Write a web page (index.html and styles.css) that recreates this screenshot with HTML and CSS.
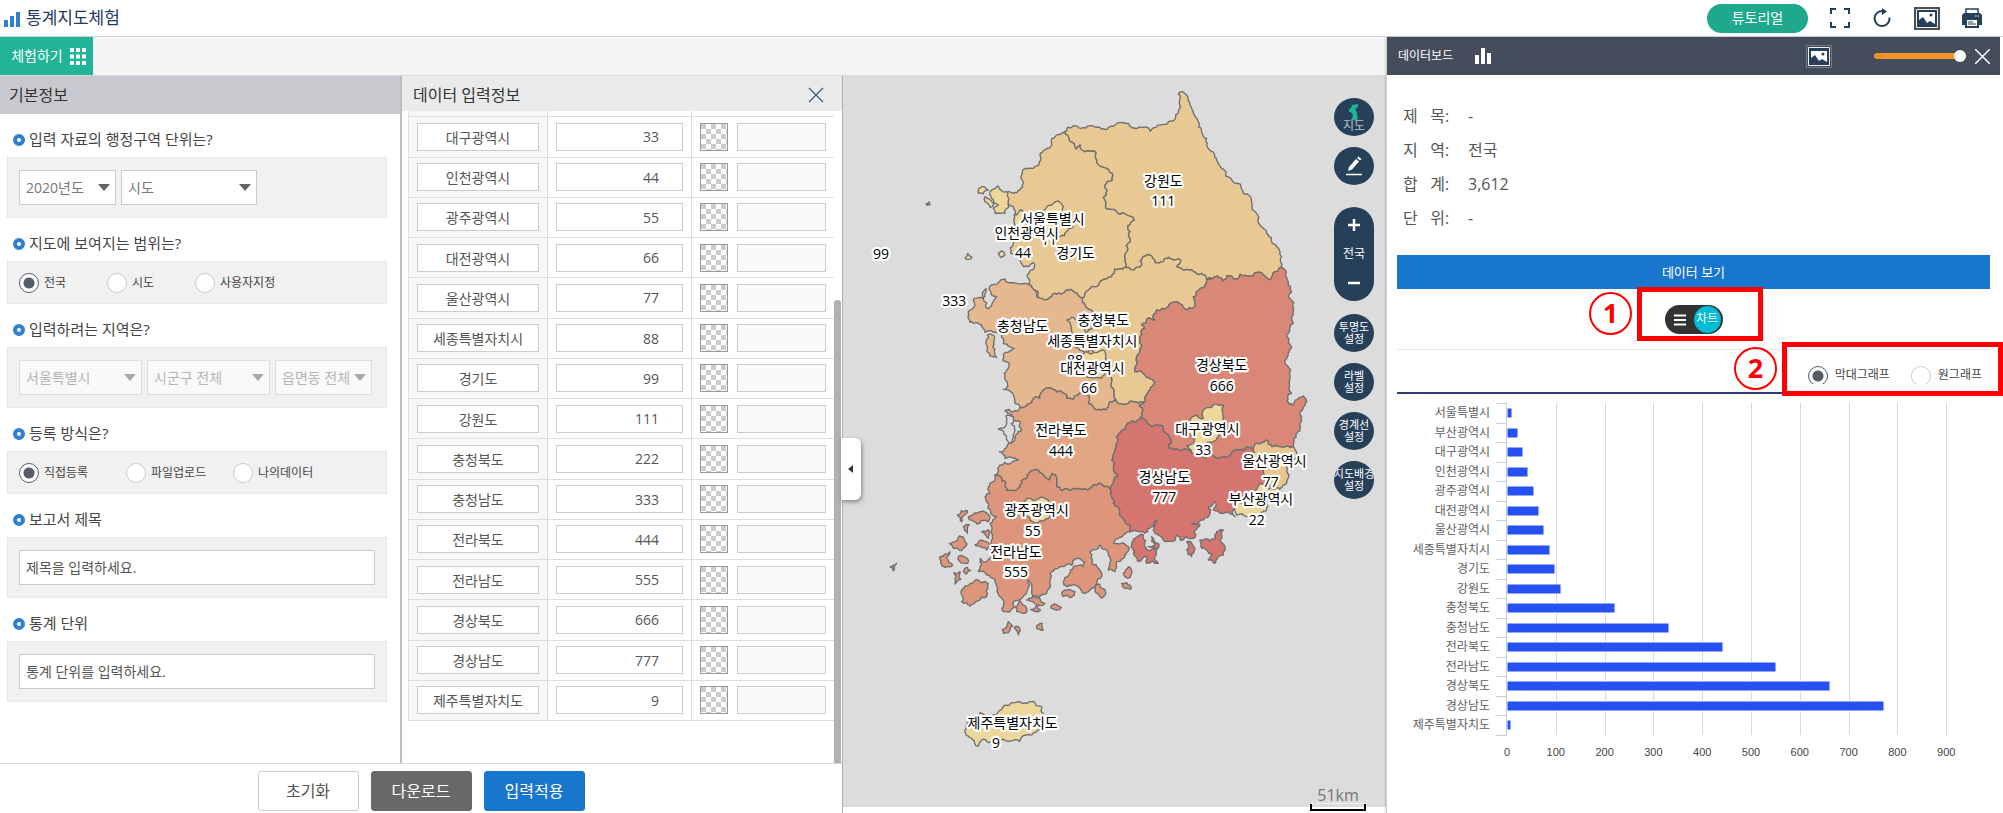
FILE: index.html
```html
<!DOCTYPE html>
<html lang="ko">
<head>
<meta charset="utf-8">
<title>통계지도체험</title>
<link rel="stylesheet" href="styles.css">
</head>
<body>
<header class="topbar">
  <svg class="logo" width="17" height="15" viewBox="0 0 17 15"><path d="M0 8h4v7H0zM6 4h4v11H6zM12 0h4v15h-4z" fill="#2f80d0"/></svg>
  <h1 class="title">통계지도체험</h1>
  <nav class="top-tools">
    <button class="tutorial" type="button">튜토리얼</button>
    <button class="tool" type="button" aria-label="전체화면"><svg width="20" height="20" viewBox="0 0 20 20"><path d="M1 6V1h5M14 1h5v5M19 14v5h-5M6 19H1v-5" fill="none" stroke="#27405a" stroke-width="2"/></svg></button>
    <button class="tool" type="button" aria-label="새로고침"><svg width="20" height="20" viewBox="0 0 20 20"><path d="M17.500 9.500a7.500 7.500 0 1 1-7.500-6.500h2" fill="none" stroke="#27405a" stroke-width="2"/><path d="M10 0l5 3.500-5 3.500z" fill="#27405a"/></svg></button>
    <button class="tool" type="button" aria-label="이미지 저장"><svg width="26" height="23" viewBox="0 0 26 23"><path d="M0 0h26v23H0z" fill="#4a4f58"/><path d="M2.500 2.500h21v18h-21z" fill="#27405a" stroke="#f2efe4"/><path d="M5 5h16v12l-5-3-3 2-4-6-4 3z" fill="#fff"/><circle cx="17" cy="8" r="1.500" fill="#27405a"/></svg></button>
    <button class="tool" type="button" aria-label="인쇄"><svg width="20" height="20" viewBox="0 0 20 20"><path d="M4 5V1h12v4" fill="none" stroke="#27405a" stroke-width="1.500"/><path d="M2 5h16l2 2v10h-3v3H3v-3H0V7z" fill="#27405a"/><path d="M5 12h10v6H5z" fill="#fff"/><path d="M6 14h5M6 16h8" stroke="#27405a"/><path d="M13 8h4" stroke="#fff" stroke-dasharray="1.500 1"/></svg></button>
  </nav>
</header>
<div class="layout">
  <main class="workspace">
    <div class="toolbar">
      <button class="try" type="button">체험하기 <svg width="16" height="17" viewBox="0 0 16 17"><path d="M0 0h4v4H0zM6 0h4v4H6zM12 0h4v4h-4zM0 6.500h4v4H0zM6 6.500h4v4H6zM12 6.500h4v4h-4zM0 13h4v4H0zM6 13h4v4H6zM12 13h4v4h-4z" fill="#fff"/></svg></button>
    </div>
    <div class="stage">
      <div class="forms">
        <div class="panels">
          <section class="panel basic">
            <h2 class="panel-title">기본정보</h2>
            <h3 class="question">입력 자료의 행정구역 단위는?</h3>
            <div class="box">
              <select class="select w-s" aria-label="연도"><option>2020년도</option></select>
              <select class="select w-l" aria-label="행정구역 단위"><option>시도</option></select>
            </div>
            <h3 class="question">지도에 보여지는 범위는?</h3>
            <div class="box radios r88">
              <label class="radio"><input type="radio" name="range" checked>전국</label>
              <label class="radio"><input type="radio" name="range">시도</label>
              <label class="radio"><input type="radio" name="range">사용자지정</label>
            </div>
            <h3 class="question">입력하려는 지역은?</h3>
            <div class="box">
              <select class="select w-m" aria-label="시도" disabled><option>서울특별시</option></select>
              <select class="select w-m" aria-label="시군구" disabled><option>시군구 전체</option></select>
              <select class="select w-s" aria-label="읍면동" disabled><option>읍면동 전체</option></select>
            </div>
            <h3 class="question">등록 방식은?</h3>
            <div class="box radios r107">
              <label class="radio"><input type="radio" name="method" checked>직접등록</label>
              <label class="radio"><input type="radio" name="method">파일업로드</label>
              <label class="radio"><input type="radio" name="method">나의데이터</label>
            </div>
            <h3 class="question"><label for="report">보고서 제목</label></h3>
            <div class="box"><input class="text" id="report" type="text" placeholder="제목을 입력하세요."></div>
            <h3 class="question"><label for="unit">통계 단위</label></h3>
            <div class="box"><input class="text" id="unit" type="text" placeholder="통계 단위를 입력하세요."></div>
          </section>
          <section class="panel data">
            <div class="panel-title light">
              <h2 class="panel-name">데이터 입력정보</h2>
              <button class="close" type="button" aria-label="닫기"><svg width="16" height="16" viewBox="0 0 16 16"><path d="M1 1l14 14M15 1L1 15" stroke="#3d5a78" stroke-width="1.300"/></svg></button>
            </div>
            <div class="scroller">
              <div class="scroll-view"><table class="grid"><tbody id="rows"></tbody></table></div>
              <div class="track"><div class="thumb"></div></div>
            </div>
          </section>
        </div>
        <div class="actions">
          <button class="btn" type="button">초기화</button>
          <button class="btn dark" type="button">다운로드</button>
          <button class="btn blue" type="button">입력적용</button>
        </div>
        <button class="fold" type="button" aria-label="접기"><svg width="5" height="8" viewBox="0 0 5 8"><path d="M5 0v8L0 4z" fill="#333"/></svg></button>
      </div>
      <section class="map" aria-label="지도">
        <svg class="map-svg" id="map" viewBox="9 -12 1629 2193" preserveAspectRatio="xMidYMin slice"></svg>
        <div class="map-tools">
          <button class="round first" type="button"><svg width="12" height="17" viewBox="0 0 12 17"><path d="M4 1l6-1v3L7 5l2 3v3l1 4-3 2-3-2 1-4-2-3H1V5l2-1z" fill="#1fb495"/></svg><span>지도</span></button>
          <button class="round edit" type="button" aria-label="그리기"><svg width="18" height="20" viewBox="0 0 18 20"><path d="M3 15l1-4 7-8 3 2.500-7 8zM12 2l1.500-1.500 3 2.500L15 4.500z" fill="#fff"/><path d="M1 18.500h16" stroke="#fff" stroke-width="1.500"/></svg></button>
          <div class="pill">
            <button type="button" aria-label="확대"><svg width="12" height="12" viewBox="0 0 12 12"><path d="M0 6h12M6 0v12" stroke="#fff" stroke-width="2.500"/></svg></button>
            <span>전국</span>
            <button type="button" aria-label="축소"><svg width="12" height="12" viewBox="0 0 12 12"><path d="M0 6h12" stroke="#fff" stroke-width="2.500"/></svg></button>
          </div>
          <button class="round" type="button"><span>투명도</span><span>설정</span></button>
          <button class="round" type="button"><span>라벨</span><span>설정</span></button>
          <button class="round" type="button"><span>경계선</span><span>설정</span></button>
          <button class="round" type="button"><span>지도배경</span><span>설정</span></button>
        </div>
        <div class="scale"><span>51km</span><i class="ruler"></i></div>
      </section>
    </div>
  </main>
  <aside class="board">
    <div class="board-head">
      <h2 class="board-title">데이터보드</h2>
      <svg width="16" height="16" viewBox="0 0 16 16"><path d="M0 7h4v9H0zM6 0h4v16H6zM12 5h4v11h-4z" fill="#fff"/></svg>
      <svg class="push" width="26" height="23" viewBox="0 0 26 23"><path d="M.500.500h25v22H.500z" fill="#454c5c" stroke="#737985"/><path d="M2.500 2.500h21v18h-21z" fill="#27405a" stroke="#f2efe4"/><path d="M5 6h16v11l-5-3-3 2-4-6-4 3z" fill="#fff"/><circle cx="17" cy="9" r="1.500" fill="#27405a"/></svg>
      <input class="slider" type="range" value="100" aria-label="투명도">
      <button class="close" type="button" aria-label="닫기"><svg width="15" height="15" viewBox="0 0 15 15"><path d="M0 0l15 15M15 0L0 15" stroke="#fff" stroke-width="1.500"/></svg></button>
    </div>
    <div class="board-body">
      <dl class="info">
        <dt>제&nbsp;&nbsp; 목:</dt><dd>-</dd>
        <dt>지&nbsp;&nbsp; 역:</dt><dd>전국</dd>
        <dt>합&nbsp;&nbsp; 계:</dt><dd>3,612</dd>
        <dt>단&nbsp;&nbsp; 위:</dt><dd>-</dd>
      </dl>
      <button class="view" type="button">데이터 보기</button>
      <div class="switch-row">
        <button class="switch" type="button"><svg width="12" height="12" viewBox="0 0 12 12"><path d="M0 1.500h12M0 6h12M0 10.500h12" stroke="#fff" stroke-width="2"/></svg><span class="knob">차트</span></button>
      </div>
      <div class="kind">
        <label class="radio"><input type="radio" name="kind" checked>막대그래프</label>
        <label class="radio"><input type="radio" name="kind">원그래프</label>
      </div>
      <svg class="chart" id="chart" viewBox="0 0 593 375"></svg>
    </div>
    <div class="mark box-1"></div><div class="num num-1">1</div>
    <div class="mark box-2"></div><div class="num num-2">2</div>
  </aside>
</div>
<script src="script.js"></script>
</body>
</html>
```
FILE: styles.css
```css
*, *::before { box-sizing: border-box; }
body {
  margin: 0;
  height: 100vh;
  display: flex;
  flex-direction: column;
  overflow: hidden;
  background: #fff;
  color: #555;
  font: 14px/20px "Open Sans", "Noto Sans CJK KR", sans-serif;
}
h1, h2, h3, dl, dd { margin: 0; font-weight: 400; }
button, input, select { font: inherit; color: inherit; margin: 0; padding: 0; }
button { border: 0; background: none; }
svg { display: block; flex: none; }

.topbar { flex: 0 0 37px; display: flex; align-items: center; padding: 0 21px 0 4px; border-bottom: 1px solid #d3d4da; }
.title { margin-left: 5px; font-size: 17px; line-height: 24px; color: #1f3864; }
.logo { margin-top: 2px; }
.top-tools { margin-left: auto; display: flex; align-items: center; gap: 22px; }
.tutorial { width: 101px; height: 29px; border-radius: 15px; background: #1ea98c; color: #fff; }

.layout { flex: 1; min-height: 0; display: flex; }
.workspace { flex: 1; min-width: 0; display: flex; flex-direction: column; }
.toolbar { flex: 0 0 39px; background: #f5f5f5; border-bottom: 1px solid #d8d8d8; }
.try { display: flex; align-items: center; justify-content: center; gap: 7px; width: 93px; height: 38px; padding-left: 4px; background: #22b496; color: #fff; }
.stage { flex: 1; min-height: 0; display: flex; }
.forms { flex: 0 0 843px; position: relative; display: flex; flex-direction: column; border-right: 1px solid #aeb0b3; }
.panels { flex: 1; min-height: 0; display: flex; }
.basic { flex: 0 0 402px; border-right: 2px solid #bcbcbc; }
.data { flex: 1; display: flex; flex-direction: column; }
.panel-title { height: 38px; padding: 0 9px; line-height: 38px; font-size: 16px; background: #c8c9ce; color: #333; }
.light { flex: none; display: flex; justify-content: space-between; align-items: center; height: 35px; padding: 3px 18px 0 11px; background: #e9eaec; }
.panel-name { font-size: 16px; line-height: 30px; color: #333; }

.question { display: flex; align-items: center; height: 43px; padding: 6px 0 0 13px; font-size: 15px; color: #444; }
.question::before { content: ""; width: 12px; height: 12px; margin: 2px 4px 0 0; border: 4px solid #2f80d0; border-radius: 50%; }
.box { display: flex; gap: 5px; margin: 0 13px 0 7px; padding: 12px 11px; border: 1px solid #e7e7e7; background: #f1f1f1; }
.select { appearance: none; height: 35px; padding: 0 6px; border: 1px solid #ccc; border-radius: 0; color: #777; background: #fff url("data:image/svg+xml,%3Csvg xmlns='http://www.w3.org/2000/svg' width='12' height='7'%3E%3Cpath d='M0 0h12L6 7z' fill='%23666'/%3E%3C/svg%3E") no-repeat right 5px center; }
.select:disabled { opacity: 1; color: #b5b5b5; border-color: #ddd; background-color: #f9f9f9; background-image: url("data:image/svg+xml,%3Csvg xmlns='http://www.w3.org/2000/svg' width='12' height='7'%3E%3Cpath d='M0 0h12L6 7z' fill='%23aaa'/%3E%3C/svg%3E"); }
.w-s { width: 97px; }
.w-m { width: 123px; }
.w-l { width: 136px; }
.radios { display: grid; gap: 0; padding: 11px 11px 10px; }
.r88 { grid-template-columns: 88px 88px 1fr; }
.r107 { grid-template-columns: 107px 107px 1fr; }
.radio { display: flex; align-items: center; gap: 5px; height: 20px; font-size: 12px; color: #444; white-space: nowrap; }
.radio input { appearance: none; flex: none; width: 20px; height: 20px; border: 1px solid #ccc; border-radius: 50%; background: #fff; }
.radio input:checked { border-color: #555c68; background: radial-gradient(circle, #555c68 0 5px, #fff 6px); }
.text { width: 356px; height: 35px; padding: 0 6px; border: 1px solid #ccc; background: #fff; }
.text::placeholder { color: #555; opacity: 1; }

.scroller { flex: 1; min-height: 0; display: flex; padding-left: 6px; }
.scroll-view { flex: 0 0 426px; display: flex; flex-direction: column; justify-content: flex-end; overflow: hidden; padding-bottom: 42px; }
.grid { flex: none; width: 427px; height: 645px; border-collapse: collapse; }
.grid td { padding: 0 8px; border: 1px solid #ddd; }
.grid td:nth-child(1) { width: 139px; background: #f5f7f9; }
.grid td:nth-child(2) { width: 144px; }
.cell { display: block; width: 100%; min-width: 0; height: 28px; border: 1px solid #ccc; background: #fff; text-align: center; }
.figure { text-align: right; padding-right: 23px; }
.swatch { display: flex; gap: 9px; }
.checker { flex: none; width: 28px; height: 28px; border: 1px solid #999; background: conic-gradient(#fff 25%, #ccc 0 50%, #fff 0 75%, #ccc 0) 0 0 / 10px 10px; }
.blank { background: #fafafa; }
.track { flex: 1; display: flex; align-items: flex-end; }
.thumb { width: 7px; height: 71%; border-radius: 3px 3px 0 0; background: #b1b1b1; }
.actions { flex: 0 0 50px; display: flex; justify-content: center; gap: 12px; padding: 7px 1px 0; border-top: 1px solid #d8d8d8; }
.btn { width: 101px; height: 40px; border: 1px solid #ccc; border-radius: 3px; font-size: 16px; background: #fff; }
.dark { background: #686868; border-color: #686868; color: #fff; }
.blue { background: #1976cd; border-color: #1976cd; color: #fff; }
.fold { position: absolute; right: -19px; top: 362px; width: 20px; height: 62px; padding-left: 7px; border-radius: 0 6px 6px 0; background: #fff; box-shadow: 1px 2px 4px #0006; z-index: 2; }

.map { flex: 1; min-width: 0; position: relative; margin-bottom: 6px; background: #dcdcdc; }
.map-svg { width: 100%; height: 100%; }
.map-svg path { stroke: #6f6f6f; stroke-width: 4; stroke-linejoin: round; }
.map-svg text { font-size: 42px; fill: #000; text-anchor: middle; paint-order: stroke; stroke: #fff; stroke-width: 13px; stroke-linejoin: round; }
.map-tools { position: absolute; top: 22px; right: 12px; display: flex; flex-direction: column; gap: 11px; }
.round { display: flex; flex-direction: column; align-items: center; justify-content: center; width: 40px; height: 38px; border-radius: 50%; overflow: hidden; background: #27405a; color: #fff; font-size: 11px; line-height: 12px; white-space: nowrap; }
.first { color: #b9c1ca; font-size: 12px; line-height: 10px; }
.edit { margin-bottom: 11px; }
.pill { display: flex; flex-direction: column; align-items: center; justify-content: space-between; width: 40px; height: 94px; margin-bottom: 2px; padding: 12px 0; border-radius: 20px; background: #27405a; color: #fff; font-size: 12px; }
.scale { position: absolute; right: 19px; bottom: -4px; display: flex; flex-direction: column; align-items: center; width: 58px; font-size: 16px; line-height: 17px; color: #777; }
.ruler { width: 56px; height: 7px; border: 2px solid #000; border-top: 0; box-shadow: 0 0 0 1px #fff8; }

.board { flex: 0 0 617px; position: relative; border-left: 1px solid #ccc; background: #fff; box-shadow: -1px 0 2px #0002; }
.board-head { display: flex; align-items: center; height: 38px; margin-right: 3px; padding: 0 10px 0 11px; background: #454c5c; color: #fff; }
.board-title { margin-right: 22px; font-size: 12px; }
.push { margin: 0 42px 0 auto; }
.slider { appearance: none; width: 92px; height: 6px; margin-right: 9px; border-radius: 3px; background: #f0932b; }
.slider::-webkit-slider-thumb { appearance: none; width: 12px; height: 12px; border-radius: 50%; background: #fff; }
.board-body { padding: 24px 13px 0 10px; }
.info { display: grid; grid-template-columns: 65px 1fr; padding-left: 6px; font-size: 16px; line-height: 34px; }
.view { display: block; width: 100%; height: 34px; margin-top: 20px; background: #1976cd; color: #fff; font-size: 13px; }
.switch-row { display: flex; justify-content: center; padding: 16px 0 15px; border-bottom: 1px solid #e8e8e8; }
.switch { display: flex; align-items: center; justify-content: space-between; width: 58px; height: 29px; padding: 0 2px 0 9px; border-radius: 15px; background: #333; }
.knob { width: 27px; height: 27px; border-radius: 50%; background: #00bcd6; color: #fff; font-size: 12px; line-height: 26px; }
.kind { display: flex; justify-content: flex-end; gap: 21px; padding: 16px 8px 8px; border-bottom: 2px solid #323c74; }
.kind .radio { gap: 7px; height: 18px; overflow: hidden; align-items: flex-start; line-height: 18px; }
.chart { width: 100%; }
.chart text { font-size: 12px; fill: #606060; text-anchor: end; }
.chart .tick { font-family: "Liberation Sans", sans-serif; font-size: 11px; text-anchor: middle; fill: #444; }
.mark { position: absolute; height: 54px; border: 5px solid #f00; }
.num { position: absolute; width: 43px; height: 43px; border: 2px solid #f00; border-radius: 50%; color: #f00; font-size: 27px; line-height: 38px; font-weight: 700; text-align: center; }
.box-1 { left: 250px; top: 250px; width: 126px; }
.num-1 { left: 202px; top: 255px; }
.box-2 { left: 395px; right: 0; top: 305px; }
.num-2 { left: 347px; top: 310px; }
```
FILE: script.js
```js
const data = [["서울특별시", 11], ["부산광역시", 22], ["대구광역시", 33], ["인천광역시", 44], ["광주광역시", 55], ["대전광역시", 66], ["울산광역시", 77], ["세종특별자치시", 88], ["경기도", 99], ["강원도", 111], ["충청북도", 222], ["충청남도", 333], ["전라북도", 444], ["전라남도", 555], ["경상북도", 666], ["경상남도", 777], ["제주특별자치도", 9]];

// Input table, scrolled to its end
document.getElementById("rows").innerHTML = [["", ""], ...data.slice(2)].map(([name, value]) =>
  `<tr><td><input class="cell" type="text" aria-label="지역" value="${name}"></td><td><input class="cell figure" type="text" aria-label="값" value="${value}"></td><td><div class="swatch"><span class="checker"></span><input class="cell blank" type="text" aria-label="색상"></div></td></tr>`).join("");

// Bar chart
const axisX = 110, top0 = 9, height = 332, step = height / data.length, unit = 0.488;
let chart = "";
for (let v = 100; v <= 900; v += 100) chart += `<path d="M${Math.round(axisX + v * unit) + 0.5} ${top0}v${height}" stroke="#d8d8d8"/>`;
for (let v = 0; v <= 900; v += 100) chart += `<text class="tick" x="${axisX + v * unit}" y="362">${v}</text>`;
data.forEach(([name, value], i) => {
  const y = Math.round(top0 + i * step);
  chart += `<path d="M99 ${y + 0.5}h11" stroke="#c0d0e0"/><rect x="${axisX}" y="${y + 5}" width="${Math.round(value * unit * 0.995)}" height="10" fill="#2750f3" stroke="#fff" stroke-width="1"/><text x="93" y="${y + 14}">${name}</text>`;
});
chart += `<path d="M99 ${top0 + height}.5h11M${axisX - 1}.5 9v${height + 1}" fill="none" stroke="#c0d0e0"/>`;
document.getElementById("chart").innerHTML = chart;

// Map. Borders shared by two provinces are one chain, so both sides meet exactly.
const P = s => s.trim().split(/\s+/).map(p => p.split(",").map(Number));
const rev = a => [...a].reverse();
const ggGw = P("857,562 855,545 860,515 870,485 870,455 863,437 883,420 870,408 840,403 822,388 797,385 790,352 800,335 795,315 817,300 817,280 805,268 790,262 770,240 768,218 745,213 725,210 720,195 708,207 690,185 685,170 670,158");
const cbGw = P("1120,595 1085,580 1060,575 1035,570 1010,560 1022,542 1005,540 985,532 970,545 945,548 938,535 925,523 908,532 905,555 890,562 857,562");
const gbGw = P("1323,562 1300,578 1287,600 1270,585 1245,578 1220,588 1200,583 1192,598 1160,588 1150,603 1120,595");
const ggCb = P("725,655 745,630 770,620 785,602 815,590 825,567 848,568 857,562");
const ggCn = P("610,658 635,650 680,630 705,637 725,655");
const cbCn = P("725,655 753,690 760,730 740,790 770,830 785,870 812,890 815,905 822,935 828,960");
const cbGb = P("915,965 930,930 945,905 915,885 885,875 898,820 905,795 900,770 915,745 905,735 920,718 945,720 950,690 985,680 1010,665 1040,690 1058,685 1060,650 1070,635 1095,615 1100,600 1120,595");
const cnJb = P("828,960 810,965 805,980 785,990 760,980 745,968 742,945 715,943 680,955 665,935 640,928 610,930 600,955 570,970 540,983");
const jbCb = P("828,960 860,972 895,970 915,965");
const jbGb = P("915,965 898,975 905,998 898,1018");
const jbGn = P("898,1018 860,1035 835,1065 830,1100 815,1140 835,1185 820,1205 812,1230");
const jbJn = P("812,1230 790,1218 760,1215 745,1230 710,1225 665,1232 650,1220 647,1185 635,1180 628,1200 600,1178 582,1170 560,1195 540,1220 500,1232 482,1190 465,1185");
const jnGn = P("812,1230 820,1270 840,1295 870,1335 870,1355");
const gbGn = P("898,1018 935,1040 970,1045 988,1070 985,1102 1030,1108 1070,1125 1160,1132 1200,1110 1240,1110");
const gwCoast = P("705,138 730,143 755,137 785,148 825,135 865,130 870,140 905,142 930,153 945,143 985,125 1015,95 1018,70 1015,42 1028,35 1040,45 1050,75 1060,100 1075,125 1085,155 1100,175 1105,205 1130,240 1150,268 1175,300 1210,340 1235,370 1235,385 1253,405 1260,435 1280,460 1297,490 1320,515 1325,530");
const ggCoast = P("650,165 635,175 632,200 615,210 600,225 598,245 580,265 548,270 545,285 550,310 540,330 520,340 505,335 510,375 523,405 525,430 530,470 520,490 512,520 540,540 550,560 580,548 583,560 565,595 575,620 600,655");
const shapes = [
  ["#e8c993", gbGw, cbGw, ggGw, gwCoast],
  ["#e8c993", ggGw, ggCoast, ggCn, ggCb],
  ["#e8c993", ggCb, rev(cbGw), rev(cbGb), rev(jbCb), rev(cbCn)],
  ["#e5b88f", ggCn, cbCn, cnJb, P("525,970 520,945 505,930 490,928 503,915 500,870 508,850 488,840 490,825 523,805 510,800 490,790 485,765 460,757 435,757 425,735 400,730 385,715 385,695 405,675 402,655 435,650 438,625 440,685 455,675 470,650 447,628 450,618 475,608 495,597 520,608 545,612 575,622 590,650 610,658")],
  ["#e0a684", rev(cnJb), jbCb, jbGb, jbGn, jbJn, P("480,1155 535,1140 495,1135 478,1115 520,1085 545,1050 540,1025 520,1022 515,1005 495,992 540,983")],
  ["#dd967c", rev(jbJn), jnGn, P("850,1365 820,1390 865,1400 850,1435 830,1445 825,1475 805,1470 810,1430 800,1410 780,1395 750,1415 755,1450 775,1465 785,1490 770,1510 735,1540 715,1520 680,1520 670,1505 700,1460 730,1460 735,1445 710,1435 670,1460 630,1480 630,1510 620,1540 575,1540 565,1500 562,1530 550,1550 520,1565 510,1595 490,1595 485,1555 475,1540 465,1500 440,1485 415,1475 420,1435 440,1445 460,1420 450,1400 455,1360 450,1330 470,1310 445,1270 435,1250 450,1240 465,1200 465,1185")],
  ["#d98877", gbGw, rev(cbGb), jbGb, gbGn, P("1250,1090 1280,1080 1320,1100 1360,1100 1370,1060 1385,1020 1380,1000 1400,965 1390,948 1360,975 1340,965 1355,940 1335,850 1348,810 1355,800 1345,760 1360,730 1360,690 1345,650 1340,592 1323,562")],
  ["#d5756f", gbGn, P("1270,1130 1280,1210 1250,1240 1200,1250 1180,1290 1185,1310 1165,1295 1145,1300 1120,1290 1125,1265 1105,1280 1110,1300 1090,1320 1055,1330 1080,1335 1065,1350 1060,1375 1040,1370 1020,1380 1010,1365 1005,1382 970,1380 960,1368 945,1360 940,1340 950,1320 945,1338 925,1345 915,1360 895,1355 870,1355"), rev(jnGn), rev(jbGn)],
  ["#edd79b", P("1150,975 1150,1010 1140,1040 1135,1070 1120,1085 1090,1100 1055,1120 1040,1095 1060,1090 1050,1020 1070,1005 1090,1015 1095,985 1120,975")],
  ["#edd79b", P("1320,1225 1300,1250 1280,1290 1250,1310 1220,1310 1190,1305 1180,1280 1220,1270 1260,1210")],
  ["#e8c48f", P("1240,1110 1250,1090 1280,1080 1320,1100 1360,1100 1360,1140 1340,1160 1340,1210 1320,1225 1290,1220 1270,1170 1240,1140")],
  ["#edd79b", P("640,370 655,363 670,380 670,400 700,440 660,470 600,450 610,395")],
  ["#edd79b", P("455,330 475,318 500,335 507,380 495,400 465,400 460,385 475,375 455,355")],
  ["#edd79b", P("415,330 430,320 445,330 430,342 415,340")],
  ["#edd79b", P("435,350 460,375 450,382 435,365")],
  ["#edd79b", P("523,405 545,390 560,440 530,440")],
  ["#edd79b", P("475,520 485,512 495,525 483,533")],
  ["#edd79b", P("375,535 383,520 396,532 385,538")],
  ["#b5a97f", P("258,372 267,366 270,374 262,376")],
  ["#e5b88f", P("442,765 458,765 458,800 470,832 450,828 442,800")],
  ["#e8c993", P("680,720 700,712 730,740 770,770 740,820 700,800")],
  ["#edd79b", P("740,815 790,810 800,850 785,895 740,890 720,850")],
  ["#edd79b", P("560,1255 610,1252 630,1270 630,1310 570,1320 550,1290")],
  ["#edd79b", P("378,1945 420,1898 490,1880 525,1868 575,1865 605,1880 610,1900 595,1950 560,1965 510,1983 470,1980 425,1980 415,1998 378,1965")],
  ["#dcdcdc", P("497,1008 520,1010 525,1050 508,1090 488,1052 475,1047 488,1045")],
  ["#d5756f", P("885,1375 910,1365 915,1400 930,1412 950,1408 955,1450 920,1450 920,1430 895,1445 880,1410")],
  ["#d5756f", P("935,1370 955,1390 950,1410 925,1400 945,1392")],
  ["#d5756f", P("1080,1380 1110,1385 1130,1355 1150,1350 1140,1380 1155,1410 1150,1425 1125,1450 1105,1440 1115,1420 1085,1405")],
  ["#d5756f", P("1040,1385 1065,1405 1055,1430 1040,1410")]
];
const islands = ["243,640 290,598 325,610 320,650 270,678 245,665", "265,410 300,395 330,410 325,425 290,432 270,420", "232,405 262,392 245,425", "250,440 268,435 262,460", "208,490 238,468 260,495 245,512", "285,495 305,480 330,500 320,510", "180,530 210,515 200,535 218,555 195,562", "235,530 265,540 262,550 240,545", "250,575 262,562 272,572 258,582", "222,578 240,575 243,598 225,612", "30,560 50,550 40,573", "405,680 420,662 440,685 435,700 410,695", "440,660 460,648 495,670 480,677", "452,688 470,677 482,690 465,695", "512,680 525,672 544,682 530,690", "545,640 560,630 585,635 575,652 550,650", "645,620 658,612 675,645 665,655 650,640", "730,580 745,560 755,570 750,593 735,590", "725,610 740,608 752,628 735,625", "366,750 385,725 398,738 385,758 370,760", "403,742 415,740 416,765", "470,745 487,730 490,750", "305,455 325,450 325,475"];
islands.forEach(s => shapes.push(["#dd967c", P(s).map(([x, y]) => [x + 120, y + 900])]));

// Splits an edge at a displaced midpoint; the result does not depend on direction.
function rough(a, b, depth) {
  const dx = b[0] - a[0], dy = b[1] - a[1];
  if (depth === 0 || Math.hypot(dx, dy) < 9) return [b];
  const h = Math.sin((a[0] + b[0]) * 12.9898 + (a[1] + b[1]) * 78.233) * 43758.5453;
  const sign = a[0] < b[0] || (a[0] === b[0] && a[1] < b[1]) ? 1 : -1;
  const k = (h - Math.floor(h) - 0.5) * 0.5 * sign;
  const m = [(a[0] + b[0]) / 2 - dy * k, (a[1] + b[1]) / 2 + dx * k];
  return [...rough(a, m, depth - 1), ...rough(m, b, depth - 1)];
}
let map = "";
shapes.forEach(([fill, ...parts]) => {
  const pts = parts.flat();
  const out = [pts[0]];
  for (let i = 1; i <= pts.length; i++) out.push(...rough(pts[i - 1], pts[i % pts.length], 3));
  map += `<path fill="${fill}" d="M${out.map(p => p.map(n => n.toFixed(1)).join(" ")).join("L")}Z"/>`;
});
const labels = [["서울특별시", 637, 415], ["11", 627, 480], ["인천광역시", 560, 458], ["44", 549, 518], ["경기도", 707, 518], ["99", 123, 521], ["333", 343, 661], ["충청남도", 548, 738], ["충청북도", 790, 718], ["세종특별자치시", 757, 781], ["88", 705, 838], ["대전광역시", 757, 862], ["66", 747, 922], ["강원도", 970, 302], ["111", 970, 363], ["경상북도", 1145, 855], ["666", 1145, 916], ["대구광역시", 1102, 1047], ["33", 1090, 1108], ["울산광역시", 1303, 1143], ["77", 1292, 1205], ["부산광역시", 1263, 1257], ["22", 1250, 1320], ["경상남도", 973, 1190], ["777", 973, 1250], ["전라북도", 663, 1050], ["444", 663, 1112], ["광주광역시", 590, 1290], ["55", 578, 1352], ["전라남도", 528, 1415], ["555", 528, 1476], ["제주특별자치도", 518, 1928], ["9", 468, 1988]];
labels.forEach(([t, x, y]) => { map += `<text x="${x}" y="${y + 16}">${t}</text>`; });
document.getElementById("map").innerHTML = map;
```
